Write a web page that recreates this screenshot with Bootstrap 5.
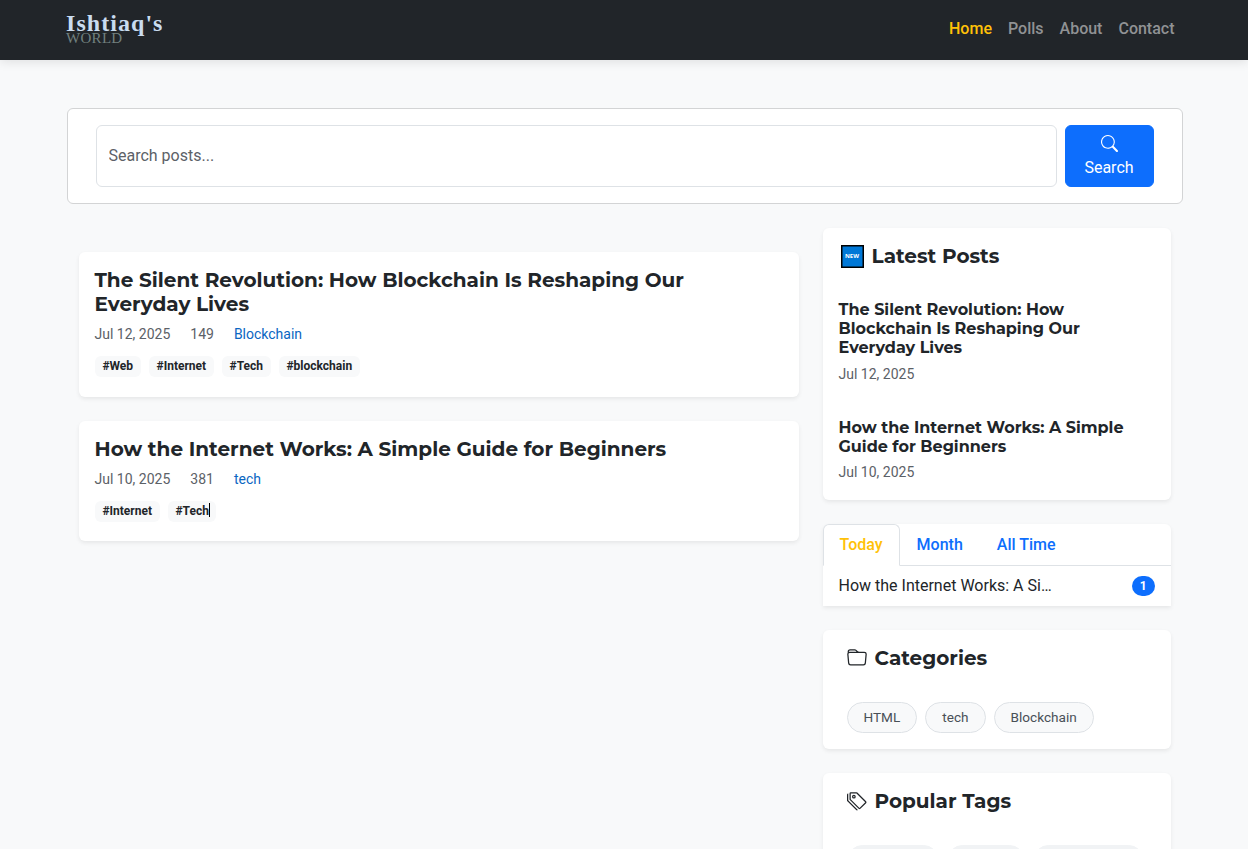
<!DOCTYPE html>
<html lang="en">
<head>
<meta charset="utf-8">
<meta name="viewport" content="width=device-width, initial-scale=1">
<title>Ishtiaq's World</title>
<link href="https://cdn.jsdelivr.net/npm/bootstrap@5.3.0/dist/css/bootstrap.min.css" rel="stylesheet">
<style>
  html, body { height: 849px; overflow: hidden; }
  body { font-family: Roboto, "Liberation Sans", sans-serif; background: #f8f9fa; color: #212529; }
  .site-wrap { width: 1140px; max-width: none; margin-left: 54.5px; margin-right: 0; }
  .topbar { height: 60px; background: #212529; box-shadow: 0 2px 10px rgba(0,0,0,.1); }
  .brand-name { font: 700 24px/24px "Liberation Serif", serif; letter-spacing: 1.05px; color: #c9dcf0; }
  .brand-sub { font: 400 15px/15px "Liberation Serif", serif; letter-spacing: .3px; color: #71807f; margin-top: -4px; }
  .brand-link { padding-top: 11px; margin-left: -.5px; }
  .topbar .nav { padding-top: 9px; }
  .topbar .nav-link { font-weight: 500; color: #909294; padding: 8px; }
  .topbar .nav-link.active { color: #ffc107; }
  .search-box { padding: 16px 28px; border: 1px solid #d3d4d5; border-radius: 6px; }
  .search-box .form-control::placeholder { color: #5c6167; }
  .search-box .btn { width: 89px; height: 62px; padding-top: 4px; }
  .soft { border: 0; border-radius: 6px; box-shadow: 0 2px 4px rgba(0,0,0,.075); }
  .display-title { font-family: Montserrat, Inter, sans-serif; font-weight: 700; font-size: 20px; line-height: 24px; margin: 0; }
  .display-sub { font-family: Montserrat, Inter, sans-serif; font-weight: 700; font-size: 16px; line-height: 19.2px; margin: 0 0 5px; }
  .latest-item { margin-top: 33px; }
  .latest-item:nth-child(2) { margin-top: 32px; }
  .latest-item:nth-child(2) .display-sub { margin-bottom: 6.5px; }
  .meta { font-size: 14px; line-height: 21px; color: #5c6167; }
  .meta a { color: #0a66c2; text-decoration: none; }
  .hash-row { margin-top: 11px; }
  .hash { font-size: 12px; line-height: 12px; font-weight: 700; background: #f8f9fa; color: #212529; padding: 4px 7.6px 5px 7.9px; border-radius: 6px; height: 21px; }
  .caret { width: 1px; height: 14px; margin: -2px -1px 0 0; background: #000; display: inline-block; vertical-align: top; }
  .tabs .nav-link { font-weight: 500; padding: 8px 16px; }
  .tabs .nav-link.active { color: #ffc107; }
  .tab-card { border-radius: 6px 6px 0 0; }
  .pill { font-size: 13.6px; line-height: 21px; padding: 4px 16px; border: 1px solid #dee2e6; border-radius: 50rem; background: #f8f9fa; color: #495057; height: 31px; }
  .pill-tag { background: #f1f3f5; border-color: #f1f3f5; padding: 4px 17.5px; }
  .pill-tag:nth-child(2) { padding: 4px 19.5px; }
  .heading-icon { margin: 2px 8px 0 0; }
  .new-mark { font: 700 6px/20px "Open Sans", sans-serif; width: 23px; height: 23px; border: 1px solid #000; box-shadow: inset 0 0 0 .5px #000; background: #0078d7; color: #fff; text-align: center; margin: 1px 8px 0 2px; }
</style>
</head>
<body>
<nav class="topbar">
  <div class="container site-wrap d-flex justify-content-between">
    <a href="#" class="brand-link text-decoration-none d-block">
      <div class="brand-name">Ishtiaq's</div>
      <div class="brand-sub">WORLD</div>
    </a>
    <ul class="nav">
      <li><a class="nav-link active" href="#">Home</a></li>
      <li><a class="nav-link" href="#">Polls</a></li>
      <li><a class="nav-link" href="#">About</a></li>
      <li><a class="nav-link" href="#">Contact</a></li>
    </ul>
  </div>
</nav>

<main class="container site-wrap mt-5">
  <form class="search-box bg-white d-flex gap-2">
    <input class="form-control" type="text" placeholder="Search posts...">
    <button class="btn btn-primary flex-shrink-0" type="button">
      <svg class="d-block mx-auto mt-1 mb-1" width="17" height="17" viewBox="0 0 16 16" fill="currentColor"><path d="M11.742 10.344a6.5 6.5 0 1 0-1.397 1.398h-.001c.03.04.062.078.098.115l3.85 3.85a1 1 0 0 0 1.415-1.414l-3.85-3.85a1.007 1.007 0 0 0-.115-.1zM12 6.5a5.5 5.5 0 1 1-11 0 5.500 5.500 0 0 1 11 0z"/></svg>
      Search
    </button>
  </form>

  <div class="row mx-0 mt-4">
    <section class="col-8 pt-4">
      <article class="card soft p-3 mb-4" style="height:145px">
        <h2 class="display-title">The Silent Revolution: How Blockchain Is Reshaping Our<br>Everyday Lives</h2>
        <div class="meta d-flex mt-2" style="gap:20px"><span>Jul 12, 2025</span><span>149</span><a href="#">Blockchain</a></div>
        <div class="hash-row d-flex gap-2"><span class="hash">#Web</span><span class="hash">#Internet</span><span class="hash">#Tech</span><span class="hash">#blockchain</span></div>
      </article>
      <article class="card soft p-3 mb-4" style="height:120px">
        <h2 class="display-title">How the Internet Works: A Simple Guide for Beginners</h2>
        <div class="meta d-flex mt-2" style="gap:20px"><span>Jul 10, 2025</span><span>381</span><a href="#">tech</a></div>
        <div class="hash-row d-flex gap-2"><span class="hash">#Internet</span><span class="hash">#Tech<i class="caret"></i></span></div>
      </article>
    </section>

    <aside class="col-4">
      <div class="card soft p-3 mb-4" style="height:272px">
        <div class="d-flex" style="height:24px"><span class="new-mark">NEW</span><h2 class="display-title">Latest Posts</h2></div>
        <div class="latest-item">
          <h3 class="display-sub">The Silent Revolution: How<br>Blockchain Is Reshaping Our<br>Everyday Lives</h3>
          <div class="meta">Jul 12, 2025</div>
        </div>
        <div class="latest-item">
          <h3 class="display-sub">How the Internet Works: A Simple<br>Guide for Beginners</h3>
          <div class="meta">Jul 10, 2025</div>
        </div>
      </div>

      <div class="card soft tab-card mb-4">
        <ul class="nav nav-tabs tabs">
          <li class="nav-item"><a class="nav-link active" href="#">Today</a></li>
          <li class="nav-item"><a class="nav-link" href="#">Month</a></li>
          <li class="nav-item"><a class="nav-link" href="#">All Time</a></li>
        </ul>
        <div class="d-flex justify-content-between align-items-center px-3" style="height:40px">
          <span>How the Internet Works: A Si…</span>
          <span class="badge rounded-pill text-bg-primary">1</span>
        </div>
      </div>

      <div class="card soft mb-4 py-3 px-4" style="height:119px">
        <div class="d-flex">
          <svg class="heading-icon" width="20" height="20" viewBox="0 0 16 16" fill="currentColor"><path d="M.54 3.870.5 3a2 2 0 0 1 2-2h3.672a2 2 0 0 1 1.414.586l.828.828A2 2 0 0 0 9.828 3h3.982a2 2 0 0 1 1.992 2.181l-.637 7A2 2 0 0 1 13.174 14H2.826a2 2 0 0 1-1.991-1.819l-.637-7a1.990 1.990 0 0 1 .342-1.310zM2.190 4a1 1 0 0 0-.996 1.090l.637 7a1 1 0 0 0 .995.910h10.348a1 1 0 0 0 .995-.910l.637-7A1 1 0 0 0 13.810 4H2.190zm4.690-1.707A1 1 0 0 0 6.172 2H2.500a1 1 0 0 0-1 .981l.006.139C1.720 3.042 1.950 3 2.190 3h5.396l-.707-.707z"/></svg>
          <h2 class="display-title">Categories</h2>
        </div>
        <div class="d-flex gap-2 mt-4 pt-2"><span class="pill">HTML</span><span class="pill">tech</span><span class="pill">Blockchain</span></div>
      </div>

      <div class="card soft mb-4 py-3 px-4" style="height:119px">
        <div class="d-flex">
          <svg class="heading-icon" width="20" height="20" viewBox="0 0 16 16" fill="currentColor"><path d="M3 2v4.586l7 7L14.586 9l-7-7H3zM2 2a1 1 0 0 1 1-1h4.586a1 1 0 0 1 .707.293l7 7a1 1 0 0 1 0 1.414l-4.586 4.586a1 1 0 0 1-1.414 0l-7-7A1 1 0 0 1 2 6.586V2z"/><path d="M5.500 5a.5.5 0 1 1 0-1 .5.5 0 0 1 0 1zm0 1a1.500 1.500 0 1 0 0-3 1.500 1.500 0 0 0 0 3zM1 7.086a1 1 0 0 0 .293.707L8.750 15.250l-.043.043a1 1 0 0 1-1.414 0l-7-7A1 1 0 0 1 0 7.586V3a1 1 0 0 1 1-1v5.086z"/></svg>
          <h2 class="display-title">Popular Tags</h2>
        </div>
        <div class="d-flex gap-2 mt-4 pt-2"><span class="pill pill-tag">#Internet</span><span class="pill pill-tag">#Tech</span><span class="pill pill-tag">#blockchain</span></div>
      </div>
    </aside>
  </div>
</main>
<script src="https://cdn.jsdelivr.net/npm/bootstrap@5.3.0/dist/js/bootstrap.bundle.min.js"></script>
</body>
</html>
